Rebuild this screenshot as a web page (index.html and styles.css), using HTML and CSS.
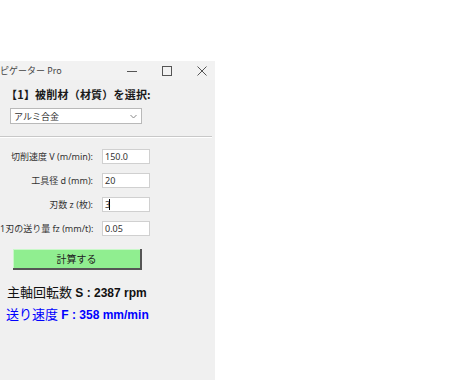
FILE: index.html
```html
<!DOCTYPE html>
<html>
<head>
    <title>ピゲーター Pro</title>
    <link rel="stylesheet" href="styles.css">
</head>
<body>
    <div class="window">
        <div class="titlebar">
            <span class="title">ピゲーター Pro</span>
            <div class="controls">
                <svg class="ctl" width="12" height="12" viewBox="0 0 12 12"><path d="M1 6.5H11" stroke="#555" stroke-width="1"/></svg>
                <svg class="ctl" width="12" height="12" viewBox="0 0 12 12"><rect x="1.5" y="1.5" width="9" height="9" fill="none" stroke="#555" stroke-width="1"/></svg>
                <svg class="ctl" width="12" height="12" viewBox="0 0 12 12"><path d="M1.5 1.5L10.5 10.5M10.5 1.5L1.5 10.5" stroke="#555" stroke-width="1"/></svg>
            </div>
        </div>

        <div class="content">
            <h1 class="section-title">【1】被削材（材質）を選択:</h1>
            <div class="combo">
                <span class="combo-text">アルミ合金</span>
                <svg width="7" height="5" viewBox="0 0 7 5"><path d="M0.5 1L3.5 4L6.5 1" fill="none" stroke="#888" stroke-width="1"/></svg>
            </div>

            <hr class="sep">

            <div class="form">
                <span class="field-label">切削速度 V (m/min):</span>
                <div class="entry">150.0</div>
                <span class="field-label">工具径 d (mm):</span>
                <div class="entry">20</div>
                <span class="field-label">刃数 z (枚):</span>
                <div class="entry">3<span class="caret"></span></div>
                <span class="field-label">1刃の送り量 fz (mm/t):</span>
                <div class="entry">0.05</div>
            </div>

            <button class="calc-button">計算する</button>

            <div class="result"><span class="jp">主軸回転数</span> S : 2387 rpm</div>
            <div class="result feed"><span class="jp">送り速度</span> F : 358 mm/min</div>
        </div>
    </div>
</body>
</html>
```

FILE: styles.css
```css
html, body {
    margin: 0;
    background: #ffffff;
}

body {
    font-family: "Noto Sans", "Noto Sans CJK JP", sans-serif;
    padding-top: 61px;
    height: 380px;
    box-sizing: border-box;
    overflow: hidden;
}

.window {
    width: 215px;
    height: 319px;
    background: #f0f0f0;
}

.titlebar {
    height: 19px;
    display: flex;
    align-items: center;
    justify-content: space-between;
    background: #f2f2f2;
}

.title {
    font-size: 9px;
    color: #444;
    line-height: 1;
}

.controls {
    display: flex;
    align-items: center;
    gap: 23px;
    margin-right: 7px;
}

.ctl {
    display: block;
}

.content {
    padding-top: 7px;
}

.section-title {
    font-family: "Noto Sans CJK JP", sans-serif;
    font-size: 11px;
    font-weight: 700;
    line-height: 14px;
    margin: 0 0 7px 6px;
    color: #1a1a1a;
    letter-spacing: 0.2px;
}

.combo {
    width: 132px;
    height: 16px;
    box-sizing: border-box;
    margin-left: 10px;
    background: #ffffff;
    border: 1px solid #b9b9b9;
    display: flex;
    align-items: center;
    justify-content: space-between;
    padding: 0 4px 0 3px;
}

.combo-text {
    font-size: 9px;
    color: #333;
}

.sep {
    border: none;
    border-top: 1px solid #c8c8c8;
    border-bottom: 1px solid #ffffff;
    margin: 12px 3px 0 0;
}

.form {
    display: grid;
    grid-template-columns: 93px 48px;
    column-gap: 9px;
    row-gap: 9px;
    margin-top: 11px;
    align-items: center;
}

.field-label {
    font-size: 9px;
    color: #333;
    text-align: right;
    white-space: nowrap;
}

.entry {
    height: 15px;
    box-sizing: border-box;
    background: #ffffff;
    border: 1px solid #d0d0d0;
    font-size: 9px;
    line-height: 13px;
    padding-left: 2px;
    color: #333;
    display: flex;
    align-items: center;
}

.caret {
    display: inline-block;
    width: 1px;
    height: 11px;
    background: #000;
    margin-left: -1px;
}

.calc-button {
    display: block;
    width: 129px;
    height: 21px;
    margin: 13px 0 0 13px;
    background: #90ee90;
    border: none;
    border-right: 2px solid #555;
    border-bottom: 2px solid #555;
    box-shadow: inset 1px 1px 0 #c8f8c8;
    font-family: "Noto Sans CJK JP", sans-serif;
    font-size: 10px;
    color: #222;
    padding: 0;
}

.result {
    font-family: "Liberation Sans", "Noto Sans CJK JP", sans-serif;
    font-size: 12px;
    font-weight: 700;
    line-height: 16px;
    color: #111;
    margin: 14px 0 0 7px;
    white-space: nowrap;
}

.result .jp {
    font-family: "Noto Sans CJK JP", sans-serif;
    font-weight: 400;
    font-size: 13px;
}

.result.feed {
    color: #0000ff;
    margin: 5px 0 0 6px;
}
```
